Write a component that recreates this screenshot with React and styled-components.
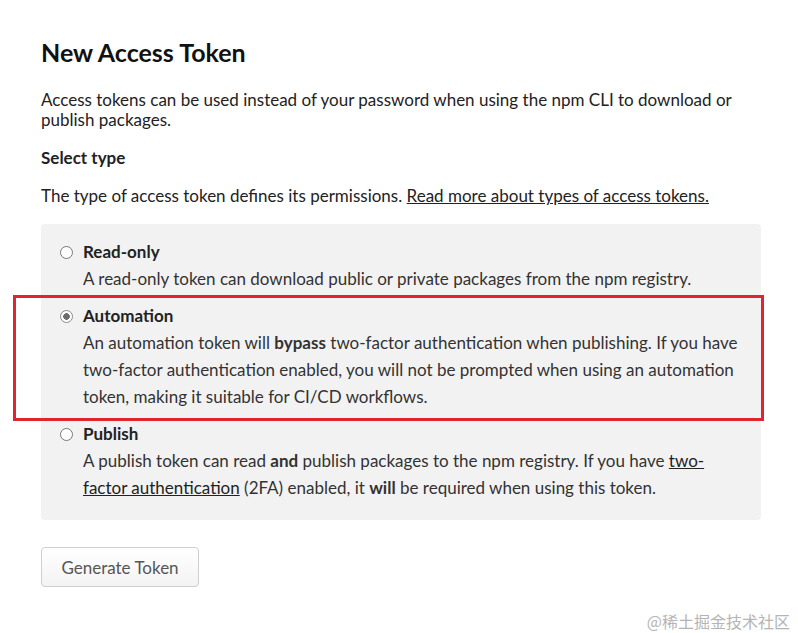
import styled, { createGlobalStyle } from 'styled-components';

const GlobalStyle = createGlobalStyle`
  body {
    margin: 0;
    background: #ffffff;
    font-family: Lato, "Open Sans", "Liberation Sans", sans-serif;
    color: #222;
  }
`;

const getOptions = () => [
  {
    id: 'read-only',
    title: 'Read-only',
    body: <>A read-only token can download public or private packages from the npm registry.</>,
  },
  {
    id: 'automation',
    title: 'Automation',
    checked: true,
    marked: true,
    body: (
      <>
        An automation token will <b>bypass</b> two-factor authentication when publishing. If you have
        two-factor authentication enabled, you will not be prompted when using an automation token,
        making it suitable for CI/CD workflows.
      </>
    ),
  },
  {
    id: 'publish',
    title: 'Publish',
    body: (
      <>
        A publish token can read <b>and</b> publish packages to the npm registry. If you have{' '}
        <Link href="#">two-factor authentication</Link> (2FA) enabled, it <b>will</b> be required when
        using this token.
      </>
    ),
  },
];

const App = () => {
  const options = getOptions();

  return (
    <Page>
      <GlobalStyle />
      <Title>New Access Token</Title>
      <Intro>
        Access tokens can be used instead of your password when using the npm CLI to download or
        publish packages.
      </Intro>
      <SubTitle>Select type</SubTitle>
      <Intro>
        The type of access token defines its permissions.{' '}
        <Link href="#">Read more about types of access tokens.</Link>
      </Intro>
      <Panel>
        {options.map(option => (
          <Option key={option.id}>
            <Radio checked={option.checked} />
            <OptionText>
              <OptionTitle>{option.title}</OptionTitle>
              <OptionBody>{option.body}</OptionBody>
            </OptionText>
            {option.marked && <Marker />}
          </Option>
        ))}
      </Panel>
      <Button>Generate Token</Button>
      <Watermark>@稀土掘金技术社区</Watermark>
    </Page>
  );
};

export default App;

const Page = styled.div`
  position: relative;
  width: 720px;
  height: 597px;
  padding: 36px 0 0 41px;
`;

const Title = styled.h1`
  margin: 0 0 22px;
  font-size: 25px;
  font-weight: 700;
  line-height: 32px;
  color: #111;
`;

const Intro = styled.p`
  margin: 0 0 18px;
  font-size: 17px;
  line-height: 20px;
  color: #222;
`;

const SubTitle = styled.h2`
  margin: 0 0 18px;
  font-size: 17px;
  font-weight: 700;
  line-height: 20px;
  color: #222;
`;

const Link = styled.a`
  color: #222;
  text-decoration: underline;
`;

const Panel = styled.div`
  display: flex;
  flex-direction: column;
  gap: 10px;
  padding: 14px 16px 19px 19px;
  background: #f2f2f2;
  border-radius: 4px;
`;

const Option = styled.div`
  position: relative;
  display: flex;
  gap: 10px;
  align-items: flex-start;
`;

const Radio = styled.span`
  flex: none;
  margin-top: 8px;
  width: 11px;
  height: 11px;
  border-radius: 50%;
  border: 1px solid ${props => (props.checked ? '#8a8a8a' : '#777')};
  background: ${props =>
    props.checked ? 'radial-gradient(circle, #6e6e6e 0 3px, #fff 3.6px)' : '#fff'};
`;

const OptionText = styled.div`
  display: flex;
  flex-direction: column;
`;

const OptionTitle = styled.div`
  font-size: 17px;
  font-weight: 700;
  line-height: 27px;
  color: #222;
`;

const OptionBody = styled.div`
  font-size: 17px;
  line-height: 27px;
  color: #333;
`;

const Marker = styled.div`
  position: absolute;
  left: -47px;
  right: -19px;
  top: -7px;
  bottom: -11px;
  border: 3px solid #e1252f;
  pointer-events: none;
`;

const Button = styled.button`
  margin-top: 27px;
  width: 158px;
  height: 40px;
  font-family: inherit;
  font-size: 17px;
  color: #555;
  background: linear-gradient(#ffffff, #f3f3f3);
  border: 1px solid #cfcfcf;
  border-radius: 4px;
`;

const Watermark = styled.div`
  position: absolute;
  right: -29px;
  bottom: 3px;
  line-height: 18px;
  font-family: "Noto Sans CJK SC", sans-serif;
  font-size: 16px;
  color: #b5b5b5;
`;
